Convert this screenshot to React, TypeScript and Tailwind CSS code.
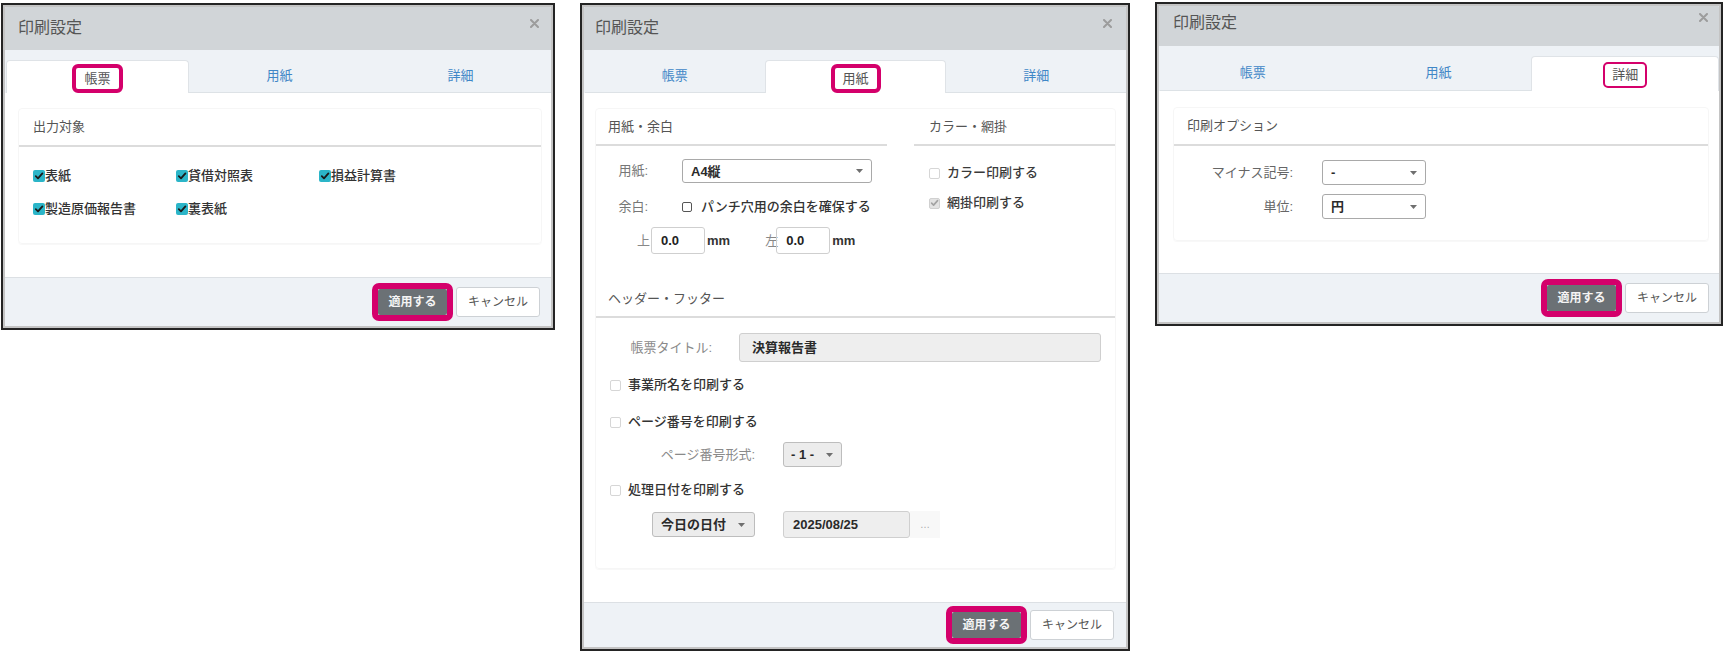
import React from "react";

function CloseX() {
  return (
    <svg width="9" height="9" viewBox="0 0 9 9" className="block">
      <path d="M1 1L8 8M8 1L1 8" stroke="#9c9c9c" strokeWidth="2" strokeLinecap="round" />
    </svg>
  );
}

function Arrow() {
  return (
    <svg width="7" height="4" viewBox="0 0 7 4" className="block shrink-0">
      <path d="M0 0H7L3.5 4Z" fill="#6f6f6f" />
    </svg>
  );
}

function CheckMark({ color }: { color: string }) {
  return (
    <svg width="10" height="10" viewBox="0 0 10 10" className="block">
      <path d="M1.8 5.2L4 7.4L8.4 2.4" stroke={color} strokeWidth="1.8" fill="none" strokeLinecap="round" strokeLinejoin="round" />
    </svg>
  );
}

function TealCheck() {
  return (
    <span className="w-[12px] h-[12px] rounded-[2px] bg-[#2bb5c8] flex items-center justify-center shrink-0">
      <CheckMark color="#1a1a1a" />
    </span>
  );
}

function LightBox() {
  return <span className="w-[11px] h-[11px] border border-[#d6d6d6] rounded-[2px] bg-white shrink-0" />;
}

function LightChecked() {
  return (
    <span className="w-[11px] h-[11px] border border-[#d0d0d0] rounded-[2px] bg-[#e3e3e3] flex items-center justify-center shrink-0">
      <CheckMark color="#a3a3a3" />
    </span>
  );
}

function DarkBox() {
  return <span className="w-[10px] h-[10px] border border-[#555] rounded-[2px] bg-white shrink-0" />;
}

function Header({ cls, titleCls, xCls }: { cls: string; titleCls: string; xCls: string }) {
  return (
    <div className={`bg-[#d1d5d8] flex items-start justify-between shrink-0 ${cls}`}>
      <span className={`text-[16px] leading-none text-[#555] ${titleCls}`}>印刷設定</span>
      <span className={xCls}>
        <CloseX />
      </span>
    </div>
  );
}

function Tabs({ active, stripCls, tabCls, thin }: { active: number; stripCls: string; tabCls: string; thin?: boolean }) {
  const labels = ["帳票", "用紙", "詳細"];
  return (
    <div className={`bg-[#eef2f6] flex items-end pl-[1px] shrink-0 ${stripCls}`}>
      {labels.map((l, i) =>
        i === active ? (
          <div
            key={l}
            className={`flex-1 bg-white rounded-t-[4px] border-x border-t border-[#dfe3e7] flex justify-center ${tabCls} ${thin ? "items-start" : "items-end"}`}
          >
            {thin ? (
              <span className="mt-[5px] h-[26px] px-[7px] border-2 border-[#d4006b] rounded-[5px] flex items-center text-[13px] text-[#555]">
                {l}
              </span>
            ) : (
              <span className="h-[29px] px-[8px] border-4 border-[#d4006b] rounded-[6px] flex items-center text-[13px] text-[#555]">
                {l}
              </span>
            )}
          </div>
        ) : (
          <div
            key={l}
            className={`flex-1 border-b border-[#dde2e6] flex items-center justify-center text-[13px] text-[#3f87c7] ${tabCls}`}
          >
            {l}
          </div>
        )
      )}
    </div>
  );
}

function Footer({ cls }: { cls: string }) {
  return (
    <div className={`border-t border-[#dce0e4] bg-[#eef2f6] flex items-center justify-end shrink-0 ${cls}`}>
      <div className="rounded-[7px] border-[6px] border-[#d4006b]">
        <div className="w-[69px] h-[26px] bg-[#6b7175] rounded-[2px] flex items-center justify-center text-[12px] font-bold text-[#f4f4f4]">
          適用する
        </div>
      </div>
      <div className="ml-[3px] w-[84px] h-[30px] bg-white border border-[#cdd1d5] rounded-[3px] flex items-center justify-center text-[12px] text-[#555]">
        キャンセル
      </div>
    </div>
  );
}

function SectionTitle({ children, cls }: { children: React.ReactNode; cls: string }) {
  return (
    <>
      <div className={`flex items-center text-[13px] text-[#555] ${cls}`}>{children}</div>
      <div className="h-[2px] bg-[#dcdcdc]" />
    </>
  );
}

function Select({ value, cls, disabled }: { value: string; cls: string; disabled?: boolean }) {
  return (
    <div
      className={`flex items-center justify-between rounded-[3px] border shrink-0 ${
        disabled ? "bg-[#ececec] border-[#bdbdbd]" : "bg-white border-[#a9a9a9]"
      } ${cls}`}
    >
      <span className="text-[13px] font-semibold text-[#2a2a2a] leading-none">{value}</span>
      <Arrow />
    </div>
  );
}

function Shell({ frameCls, children }: { frameCls: string; children: React.ReactNode }) {
  return (
    <div className={`border-2 border-[#242424] bg-[#c4c4c4] shrink-0 ${frameCls}`}>
      <div className="h-full flex flex-col border-2 border-[#c4c4c4] rounded-[3px] overflow-hidden bg-white">{children}</div>
    </div>
  );
}

const PANEL = "rounded-[4px] border border-[#f6f6f6] shadow-[0_1px_1px_rgba(0,0,0,0.03)]";

function Dialog1() {
  const items = ["表紙", "貸借対照表", "損益計算書", "製造原価報告書", "裏表紙"];
  return (
    <Shell frameCls="ml-[1px] mt-[3px] w-[554px] h-[327px]">
      <Header cls="h-[43px] pl-[13px] pr-[12px]" titleCls="mt-[13px]" xCls="mt-[12px]" />
      <Tabs active={0} stripCls="h-[43px]" tabCls="h-[33px]" />
      <div className="flex-1 bg-white pt-[15px] pl-[13px] pr-[9px]">
        <div className={PANEL}>
          <SectionTitle cls="h-[36px] pl-[14px]">出力対象</SectionTitle>
          <div className="grid grid-cols-[143px_143px_143px] gap-y-[13px] pl-[14px] pt-[19px] pb-[24px]">
            {items.map((t) => (
              <div key={t} className="flex items-center h-[20px] text-[13px] text-[#333] font-medium">
                <TealCheck />
                <span>{t}</span>
              </div>
            ))}
          </div>
        </div>
      </div>
      <Footer cls="h-[49px] pr-[11px]" />
    </Shell>
  );
}

function Dialog2() {
  return (
    <Shell frameCls="ml-[25px] mt-[3px] w-[550px] h-[648px]">
      <Header cls="h-[43px] pl-[11px] pr-[14px]" titleCls="mt-[13px]" xCls="mt-[12px]" />
      <Tabs active={1} stripCls="h-[43px]" tabCls="h-[33px]" />
      <div className="flex-1 bg-white pt-[15px] pl-[11px] pr-[10px]">
        <div className={`${PANEL} pb-[30px]`}>
          <div className="flex items-start">
            <div className="w-[291px]">
              <SectionTitle cls="h-[35px] pl-[12px]">用紙・余白</SectionTitle>
              <div className="pt-[13px]">
                <div className="flex items-center h-[24px]">
                  <span className="w-[52px] text-right text-[13px] text-[#777]">用紙:</span>
                  <Select value="A4縦" cls="ml-[34px] w-[190px] h-[24px] pl-[8px] pr-[8px]" />
                </div>
                <div className="flex items-center h-[20px] mt-[14px]">
                  <span className="w-[52px] text-right text-[13px] text-[#777]">余白:</span>
                  <span className="ml-[34px] flex items-center">
                    <DarkBox />
                  </span>
                  <span className="ml-[9px] text-[13px] text-[#333] font-medium whitespace-nowrap">パンチ穴用の余白を確保する</span>
                </div>
                <div className="flex items-center h-[27px] mt-[10px] pl-[41px]">
                  <span className="text-[13px] text-[#888]">上</span>
                  <div className="ml-[1px] w-[54px] h-[27px] border border-[#cfcfcf] rounded-[3px] flex items-center pl-[9px] text-[13px] font-semibold text-[#222]">
                    0.0
                  </div>
                  <span className="ml-[2px] text-[13px] font-semibold text-[#333]">mm</span>
                  <span className="ml-[35px] text-[13px] text-[#888]">左</span>
                  <div className="ml-[-2px] w-[54px] h-[27px] border border-[#cfcfcf] rounded-[3px] flex items-center pl-[9px] text-[13px] font-semibold text-[#222]">
                    0.0
                  </div>
                  <span className="ml-[2px] text-[13px] font-semibold text-[#333]">mm</span>
                </div>
              </div>
            </div>
            <div className="ml-[27px] flex-1">
              <SectionTitle cls="h-[35px] pl-[15px]">カラー・網掛</SectionTitle>
              <div className="pt-[17px] pl-[15px]">
                <div className="flex items-center h-[20px]">
                  <LightBox />
                  <span className="ml-[7px] text-[13px] text-[#3a3a3a] font-medium">カラー印刷する</span>
                </div>
                <div className="flex items-center h-[20px] mt-[10px]">
                  <LightChecked />
                  <span className="ml-[7px] text-[13px] text-[#3a3a3a] font-medium">網掛印刷する</span>
                </div>
              </div>
            </div>
          </div>

          <div className="mt-[27px]">
            <SectionTitle cls="h-[35px] pl-[12px]">ヘッダー・フッター</SectionTitle>
            <div className="flex items-center h-[29px] mt-[15px]">
              <span className="w-[116px] text-right text-[13px] text-[#8a8a8a]">帳票タイトル:</span>
              <div className="ml-[27px] w-[362px] h-[29px] bg-[#eeeeee] border border-[#cfcfcf] rounded-[3px] flex items-center pl-[12px] text-[13px] font-semibold text-[#2a2a2a]">
                決算報告書
              </div>
            </div>
            <div className="flex items-center h-[20px] mt-[13px] pl-[14px]">
              <LightBox />
              <span className="ml-[7px] text-[13px] text-[#333] font-medium">事業所名を印刷する</span>
            </div>
            <div className="flex items-center h-[20px] mt-[17px] pl-[14px]">
              <LightBox />
              <span className="ml-[7px] text-[13px] text-[#333] font-medium">ページ番号を印刷する</span>
            </div>
            <div className="flex items-center h-[25px] mt-[10px]">
              <span className="w-[159px] text-right text-[13px] text-[#8a8a8a]">ページ番号形式:</span>
              <Select value="- 1 -" disabled cls="ml-[28px] w-[59px] h-[25px] pl-[7px] pr-[8px]" />
            </div>
            <div className="flex items-center h-[20px] mt-[13px] pl-[14px]">
              <LightBox />
              <span className="ml-[7px] text-[13px] text-[#333] font-medium">処理日付を印刷する</span>
            </div>
            <div className="flex items-center h-[27px] mt-[11px] pl-[56px]">
              <Select value="今日の日付" disabled cls="w-[103px] h-[25px] pl-[8px] pr-[9px]" />
              <div className="ml-[28px] w-[127px] h-[27px] bg-[#eeeeee] border border-[#cfcfcf] rounded-[3px] flex items-center pl-[9px] text-[13px] font-semibold text-[#2a2a2a]">
                2025/08/25
              </div>
              <div className="w-[30px] h-[27px] bg-[#f8f8f8] flex items-center justify-center text-[10px] text-[#aaa]">…</div>
            </div>
          </div>
        </div>
      </div>
      <Footer cls="h-[45px] pr-[12px]" />
    </Shell>
  );
}

function Dialog3() {
  return (
    <Shell frameCls="ml-[25px] mt-[2px] w-[568px] h-[324px]">
      <Header cls="h-[40px] pl-[14px] pr-[11px]" titleCls="mt-[9px]" xCls="mt-[7px]" />
      <Tabs active={2} stripCls="h-[45px]" tabCls="h-[35px]" thin />
      <div className="flex-1 bg-white pt-[16px] pl-[14px] pr-[10px]">
        <div className={PANEL}>
          <SectionTitle cls="h-[36px] pl-[13px]">印刷オプション</SectionTitle>
          <div className="pt-[14px] pb-[21px]">
            <div className="flex items-center h-[25px]">
              <span className="w-[119px] text-right text-[13px] text-[#666]">マイナス記号:</span>
              <Select value="-" cls="ml-[29px] w-[104px] h-[25px] pl-[8px] pr-[8px]" />
            </div>
            <div className="flex items-center h-[25px] mt-[9px]">
              <span className="w-[119px] text-right text-[13px] text-[#666]">単位:</span>
              <Select value="円" cls="ml-[29px] w-[104px] h-[25px] pl-[8px] pr-[8px]" />
            </div>
          </div>
        </div>
      </div>
      <Footer cls="h-[49px] pr-[10px]" />
    </Shell>
  );
}

export default function App() {
  return (
    <div className="font-['Liberation_Sans','Noto_Sans_CJK_JP',sans-serif] w-[1725px] h-[652px] bg-white flex items-start overflow-hidden">
      <Dialog1 />
      <Dialog2 />
      <Dialog3 />
    </div>
  );
}
